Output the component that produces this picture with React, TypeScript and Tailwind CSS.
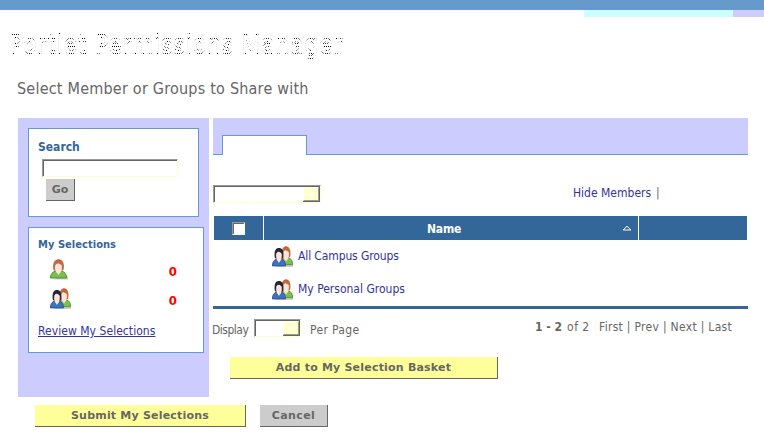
import React from "react";

const ui = "font-['DejaVu_Sans_Condensed','DejaVu_Sans',sans-serif] [font-stretch:condensed]";

function Person({ x = 0, dark = false }: { x?: number; dark?: boolean }) {
  return (
    <g transform={`translate(${x} 0)`}>
      <path d="M0 19Q0 13.500 5 12h6q5 1.500 5 7z" fill={dark ? "#3f72bd" : "#7ac04a"} stroke={dark ? "#2d4f95" : "#4f8f35"} strokeWidth="1" />
      <path d="M5.5 12 8 16l2.500-4z" fill={dark ? "#f4f4ff" : "#ffe1cc"} />
      <path d="M3 11C1.500 3 4.500 .8 8 .8S14.500 3 13 11l-2 1H5z" fill={dark ? "#252735" : "#b8703f"} />
      <path d="M4.600 6.500Q6 4 8 4.500T11.400 6.500Q12 14 8 14.500 4 14 4.600 6.500z" fill="#ffe3dc" />
      {!dark && <path d="M5 2.500Q8-.5 11 2.500" fill="none" stroke="#e05038" strokeWidth="1.300" />}
    </g>
  );
}

function UserIcon() {
  return (
    <svg width="19" height="21" viewBox="0 0 19 21" className="block">
      <path d="M4 20.500h14v-3l-3-3" fill="#ccc" />
      <Person x={.5} />
    </svg>
  );
}

function GroupIcon() {
  return (
    <svg width="22" height="21" viewBox="0 0 22 21" className="block">
      <path d="M3 21h18v-3l-3-4" fill="#ccc" />
      <g transform="translate(7.500 0) scale(.82 .98)"><Person /></g>
      <g transform="translate(.4 1.300) scale(.82 .98)"><Person dark /></g>
    </svg>
  );
}

function Select({ size }: { size: string }) {
  return (
    <div className={`${size} flex shrink-0 border border-t-[#999] border-l-[#999] border-r-[#ffffcc] border-b-[#ffffcc]`}>
      <div className="flex flex-1 justify-end border-t border-l border-[#666]">
        <div className="flex w-[17px] items-center justify-center border-r border-b border-[#666] bg-[#ffffcc]">
          <div className="flex h-full w-full items-center justify-center border border-t-white border-l-white border-r-[#999] border-b-[#999]">
            <svg width="6" height="3"><path d="M0 0h6L3 3z" fill="white" /></svg>
          </div>
        </div>
      </div>
    </div>
  );
}

const button = "flex items-center justify-center border-r border-b border-[#666] font-['DejaVu_Sans',sans-serif] [font-stretch:normal] text-[11px] font-bold text-[#666] whitespace-nowrap";

export default function App() {
  return (
    <div className={`h-[438px] w-[764px] overflow-hidden bg-white text-[12px] leading-[16px] whitespace-nowrap text-[#666] ${ui}`}>
      <div className="h-[10px] bg-[#6699cc]" />
      <div className="flex h-[7px] justify-end">
        <div className="w-[149px] bg-[#ccffff]" />
        <div className="w-[31px] bg-[#ccccff]" />
      </div>
      <h1 className="ml-[10px] mt-[12px] h-[32px] w-[350px] text-[24px] leading-[32px] tracking-[1px] text-white [text-shadow:0_0_0_#fff,0_0_0_#fff,0_0_0_#fff,0_0_0_#fff,0_-1px_0_#000,0_1px_0_#000] [mask-image:repeating-conic-gradient(#000_0_25%,transparent_0_50%)] [mask-size:2px_2px]">
        Portlet Permissions Manager
      </h1>
      <h2 className="mt-[18px] ml-[17px] h-[39px] text-[16px] leading-[20px] tracking-[.22px]">Select Member or Groups to Share with</h2>
      <div className="flex pl-[18px]">
        <aside className="h-[279px] w-[191px] bg-[#ccccff] pt-[10px] pl-[10px]">
          <section className="h-[89px] w-[171px] border border-[#6699cc] bg-white pt-[10px] pl-[9px]">
            <h3 className="text-[12px] font-bold text-[#336699]">Search</h3>
            <div className="mt-[4px] ml-[4px] h-[18px] w-[136px] border border-t-[#999] border-l-[#999] border-r-[#ffffcc] border-b-[#ffffcc]">
              <div className="h-full border-t border-l border-[#666]" />
            </div>
            <div className={`${button} mt-[2px] ml-[8px] h-[22px] w-[29px] bg-[#ccc]`}>Go</div>
          </section>
          <section className="mt-[10px] h-[126px] w-[176px] border border-[#6699cc] bg-white pt-[9px] pl-[9px]">
            <h3 className="text-[11px] font-bold tracking-[.05px] text-[#336699]">My Selections</h3>
            <div className="mt-[6px] ml-[12px] flex h-[21px] w-[127px] justify-between">
              <UserIcon /><b className="mt-[5px] text-[13px] text-[#f00]">0</b>
            </div>
            <div className="mt-[8px] ml-[12px] flex h-[21px] w-[127px] justify-between">
              <GroupIcon /><b className="mt-[5px] text-[13px] text-[#f00]">0</b>
            </div>
            <div className="mt-[14px] tracking-[.05px] text-[#333399] underline">Review My Selections</div>
          </section>
        </aside>
        <main className="ml-[4px] w-[535px]">
          <div className="flex h-[37px] items-end bg-[#ccccff]">
            <div className="h-px w-[9px] bg-[#6699cc]" />
            <div className="h-[20px] w-[85px] border border-b-0 border-[#6699cc] bg-white" />
            <div className="h-px flex-1 bg-[#6699cc]" />
          </div>
          <div className="mt-[30px] flex h-[18px]">
            <Select size="h-[18px] w-[108px]" />
            <div className="ml-[252px]"><span className="text-[#333399]">Hide Members</span><span className="ml-[5px]">|</span></div>
          </div>
          <div className="mt-[13px] ml-px flex h-[24px] w-[533px] gap-px text-white">
            <div className="flex w-[49px] items-center justify-center bg-[#336699]">
              <div className="size-[13px] border border-t-[#999] border-l-[#999] border-r-[#ffffcc] border-b-[#ffffcc] bg-white"><div className="h-full border-t border-l border-[#666]" /></div>
            </div>
            <div className="flex w-[374px] items-center bg-[#336699]">
              <b className="ml-[163px] w-[195px] pt-px tracking-[-.2px]">Name</b>
              <svg width="10" height="6"><path d="M1 5 5 1.2 9 5z" fill="none" stroke="white" /></svg>
            </div>
            <div className="flex-1 bg-[#336699]" />
          </div>
          <div className="flex h-[66px] flex-col pl-[59px] text-[#333399]">
            <div className="mt-[6px] flex h-[21px]"><GroupIcon /><span className="mt-[2px] ml-[4px] tracking-[-.12px]">All Campus Groups</span></div>
            <div className="mt-[12px] flex h-[21px]"><GroupIcon /><span className="mt-[2px] ml-[4px]">My Personal Groups</span></div>
          </div>
          <div className="h-[3px] bg-[#336699]" />
          <div className="flex h-[30px] pt-[10px]">
            <span className="mt-[3px] -ml-px w-[42px] tracking-[-.5px]">Display</span>
            <Select size="h-[18px] w-[47px]" />
            <span className="mt-[3px] ml-[9px] w-[225px] tracking-[.35px]">Per Page</span>
            <span className="w-[64px]"><b>1 - 2</b><span className="ml-[5px] tracking-[.5px]">of 2</span></span>
            <span className="tracking-[.3px]">First | Prev | Next | Last</span>
          </div>
          <div className={`${button} mt-[18px] ml-[17px] h-[22px] w-[268px] bg-[#ffff99] tracking-[.2px]`}>Add to My Selection Basket</div>
        </main>
      </div>
      <div className="mt-[8px] ml-[35px] flex gap-[14px]">
        <div className={`${button} h-[22px] w-[211px] bg-[#ffff99] tracking-[.2px]`}>Submit My Selections</div>
        <div className={`${button} h-[22px] w-[68px] bg-[#ccc] tracking-[.4px]`}>Cancel</div>
      </div>
    </div>
  );
}
